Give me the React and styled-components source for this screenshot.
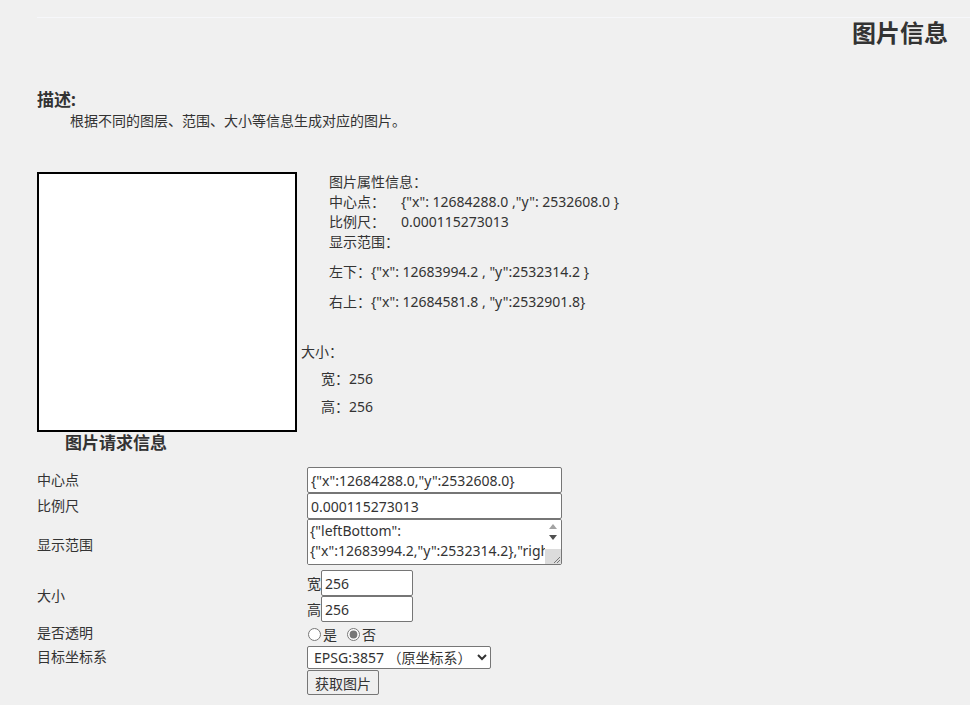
import React from "react";
import styled, { createGlobalStyle } from "styled-components";

const Global = createGlobalStyle`
  body {
    margin: 0;
    background: #f0f0f0;
    color: #333;
    font-family: "Noto Sans", "Noto Sans CJK SC", sans-serif;
    font-size: 14px;
  }
`;

const Page = styled.div`
  padding: 17px 0 0 37px;
  width: 933px;
`;

const Rule = styled.div`
  height: 1px;
  background: #f6f7fa;
`;

const Title = styled.h1`
  margin: 0;
  padding-right: 22px;
  text-align: right;
  font-size: 24px;
  line-height: 30px;
  font-weight: 700;
`;

const Section = styled.div`
  margin-top: 41px;
`;

const SubTitle = styled.h3`
  margin: 0;
  padding-left: ${(p) => p.indent || 0}px;
  font-size: 17px;
  line-height: 22px;
  font-weight: 700;
`;

const Text = styled.p`
  margin: 0;
  padding-left: ${(p) => p.indent || 0}px;
  line-height: 20px;
`;

const Preview = styled.div`
  display: flex;
  margin-top: 41px;
`;

const ImageBox = styled.div`
  width: 256px;
  height: 256px;
  border: 2px solid #000;
  background: #fff;
  flex: none;
`;

const Side = styled.div`
  padding-left: 4px;
`;

const Attrs = styled.div`
  padding-left: 28px;
`;

const Line = styled.div`
  display: flex;
  line-height: 20px;
  padding-left: ${(p) => p.indent || 0}px;
  margin-top: ${(p) => p.gap || 0}px;
`;

const Key = styled.span`
  width: 72px;
`;

const Form = styled.div`
  display: grid;
  grid-template-columns: 270px auto;
  align-items: center;
  margin-top: 13px;
`;

const Label = styled.div`
  line-height: 20px;
`;

const Cell = styled.div`
  display: flex;
  flex-direction: column;
  align-items: flex-start;
  padding-top: ${(p) => p.top || 0}px;
  padding-bottom: ${(p) => p.bottom || 0}px;
`;

const Input = styled.input`
  box-sizing: border-box;
  width: ${(p) => p.w || 255}px;
  height: 26px;
  margin: 0;
  padding: 1px 3px;
  border: 1px solid #767676;
  border-radius: 2px;
  background: #fff;
  color: #333;
  font: 14px "Noto Sans", "Noto Sans CJK SC", sans-serif;
`;

const AreaBox = styled.div`
  box-sizing: border-box;
  display: flex;
  width: 255px;
  height: 46px;
  border: 1px solid #767676;
  border-radius: 2px;
  background: #fff;
  overflow: hidden;
`;

const Area = styled.textarea`
  flex: 1;
  min-width: 0;
  margin: 0;
  padding: 1px 2px;
  border: none;
  outline: none;
  resize: none;
  background: #fff;
  color: #333;
  font: 14px/20px "Noto Sans", "Noto Sans CJK SC", sans-serif;
  white-space: pre;
  overflow: hidden;
`;

const ScrollBar = styled.div`
  width: 16px;
  display: flex;
  flex-direction: column;
  align-items: center;
  background: #fff;
`;

const Arrow = styled.div`
  height: ${(p) => p.h}px;
  display: flex;
  align-items: center;
  justify-content: center;
`;

const Grip = styled.div`
  margin-top: auto;
  width: 16px;
  height: 15px;
  background: #dcdcdc;
  display: flex;
  align-items: flex-end;
  justify-content: flex-end;
`;

const SizeRow = styled.label`
  display: flex;
  align-items: center;
`;

const Radios = styled.div`
  display: flex;
  align-items: center;
  height: 20px;
  input {
    margin: 0 2px 0 1px;
    width: 13px;
    height: 13px;
    accent-color: #777;
  }
  label {
    margin-right: 9px;
  }
`;

const Select = styled.select`
  width: 184px;
  height: 23px;
  margin: 0;
  padding: 0 2px;
  border: 1px solid #767676;
  border-radius: 2px;
  background: #fff;
  color: #333;
  font: 14px "Noto Sans", "Noto Sans CJK SC", sans-serif;
`;

const Button = styled.button`
  margin-top: 1px;
  height: 25px;
  padding: 0 7px;
  border: 1px solid #767676;
  border-radius: 2px;
  background: #efefef;
  color: #333;
  font: 14px "Noto Sans CJK SC", sans-serif;
`;

export default function App() {
  return (
    <Page>
      <Global />
      <Rule />
      <Title>图片信息</Title>
      <Section>
        <SubTitle>描述:</SubTitle>
        <Text indent={33}>根据不同的图层、范围、大小等信息生成对应的图片。</Text>
      </Section>
      <Preview>
        <ImageBox />
        <Side>
          <Attrs>
            <Line>图片属性信息：</Line>
            <Line><Key>中心点：</Key>{'{"x": 12684288.0 ,"y": 2532608.0 }'}</Line>
            <Line><Key>比例尺：</Key>0.000115273013</Line>
            <Line>显示范围：</Line>
            <Line gap={10}>左下：{'{"x": 12683994.2 , "y":2532314.2 }'}</Line>
            <Line gap={10}>右上：{'{"x": 12684581.8 , "y":2532901.8}'}</Line>
          </Attrs>
          <Line gap={30}>大小：</Line>
          <Line indent={20} gap={7}>宽：256</Line>
          <Line indent={20} gap={8}>高：256</Line>
        </Side>
      </Preview>
      <SubTitle indent={28}>图片请求信息</SubTitle>
      <Form>
        <Label>中心点</Label>
        <Cell><Input defaultValue={'{"x":12684288.0,"y":2532608.0}'} /></Cell>
        <Label>比例尺</Label>
        <Cell><Input defaultValue="0.000115273013" /></Cell>
        <Label>显示范围</Label>
        <Cell bottom={5}>
          <AreaBox>
            <Area defaultValue={'{"leftBottom":\n{"x":12683994.2,"y":2532314.2},"rightTop":{"x":12684581.8,"y":2532901.8}}'} />
            <ScrollBar>
              <Arrow h={12}>
                <svg width="8" height="5" viewBox="0 0 8 5"><path d="M0 5 L4 0 L8 5 Z" fill="#a3a3a3" /></svg>
              </Arrow>
              <Arrow h={10}>
                <svg width="8" height="5" viewBox="0 0 8 5"><path d="M0 0 L8 0 L4 5 Z" fill="#505050" /></svg>
              </Arrow>
              <Grip>
                <svg width="10" height="10" viewBox="0 0 10 10">
                  <path d="M9 3 L3 9 M9 6 L6 9" stroke="#777" strokeWidth="1" />
                </svg>
              </Grip>
            </ScrollBar>
          </AreaBox>
        </Cell>
        <Label>大小</Label>
        <Cell>
          <SizeRow>宽<Input w={92} defaultValue="256" /></SizeRow>
          <SizeRow>高<Input w={92} defaultValue="256" /></SizeRow>
        </Cell>
        <Label>是否透明</Label>
        <Cell top={2}>
          <Radios>
            <input type="radio" name="t" id="t1" />
            <label htmlFor="t1">是</label>
            <input type="radio" name="t" id="t2" defaultChecked />
            <label htmlFor="t2">否</label>
          </Radios>
        </Cell>
        <Label>目标坐标系</Label>
        <Cell top={2}>
          <Select defaultValue="3857">
            <option value="3857">EPSG:3857 （原坐标系）</option>
            <option value="4326">EPSG:4326</option>
          </Select>
        </Cell>
        <span />
        <Cell>
          <Button>获取图片</Button>
        </Cell>
      </Form>
    </Page>
  );
}
